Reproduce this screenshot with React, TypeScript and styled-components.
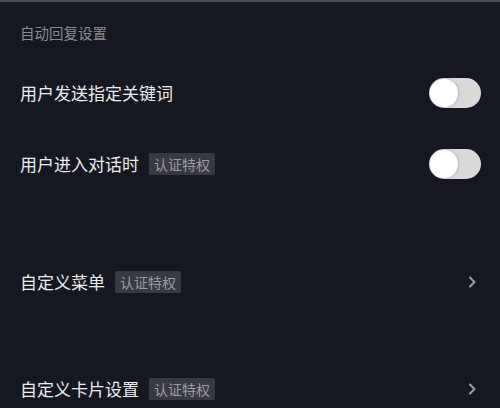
import React from 'react';
import styled, { createGlobalStyle } from 'styled-components';

const GlobalStyle = createGlobalStyle`
  html, body {
    margin: 0;
    padding: 0;
    background: #161821;
  }
  body {
    font-family: 'Noto Sans CJK SC', 'Noto Sans', sans-serif;
  }
`;

const Page = styled.div`
  width: 500px;
  height: 408px;
  overflow: hidden;
  background: #161821;
  border-top: 2px solid #4b4c56;
  box-sizing: border-box;
`;

const SectionTitle = styled.div`
  padding: 21px 20px 0;
  height: 55px;
  box-sizing: border-box;
  font-size: 14.5px;
  line-height: 20px;
  color: #8b8c92;
`;

const Row = styled.div<{ $height: number }>`
  display: flex;
  align-items: center;
  height: ${(p) => p.$height}px;
  padding: 0 19px 0 20px;
  box-sizing: border-box;
`;

const Gap = styled.div`
  height: 29px;
`;

const Label = styled.span`
  font-size: 17px;
  line-height: 24px;
  color: #ececee;
`;

const Badge = styled.span`
  margin-left: 10px;
  padding: 0 5px;
  height: 22px;
  line-height: 22px;
  font-size: 14px;
  color: #9c9da2;
  background: #383a42;
  border-radius: 2px;
`;

const Spacer = styled.div`
  flex: 1;
`;

const Toggle = styled.div`
  position: relative;
  width: 52px;
  height: 30px;
  border-radius: 15px;
  background: #dadadc;
`;

const Knob = styled.div`
  position: absolute;
  left: 1px;
  top: 1px;
  width: 28px;
  height: 28px;
  border-radius: 50%;
  background: #ffffff;
  box-shadow: 1px 0 3px rgba(0, 0, 0, 0.15);
`;

const ChevronIcon = styled.svg`
  margin-right: 4px;
`;

const Chevron = () => (
  <ChevronIcon width="10" height="14" viewBox="0 0 10 14">
    <path d="M3 2.5 L7.5 7 L3 11.5" fill="none" stroke="#9c9da2" strokeWidth="2" strokeLinecap="round" strokeLinejoin="round" />
  </ChevronIcon>
);

const App: React.FC = () => (
  <Page>
    <GlobalStyle />
    <SectionTitle>自动回复设置</SectionTitle>
    <Row $height={71}>
      <Label>用户发送指定关键词</Label>
      <Spacer />
      <Toggle><Knob /></Toggle>
    </Row>
    <Row $height={71}>
      <Label>用户进入对话时</Label>
      <Badge>认证特权</Badge>
      <Spacer />
      <Toggle><Knob /></Toggle>
    </Row>
    <Gap />
    <Row $height={107}>
      <Label>自定义菜单</Label>
      <Badge>认证特权</Badge>
      <Spacer />
      <Chevron />
    </Row>
    <Row $height={107}>
      <Label>自定义卡片设置</Label>
      <Badge>认证特权</Badge>
      <Spacer />
      <Chevron />
    </Row>
  </Page>
);

export default App;
